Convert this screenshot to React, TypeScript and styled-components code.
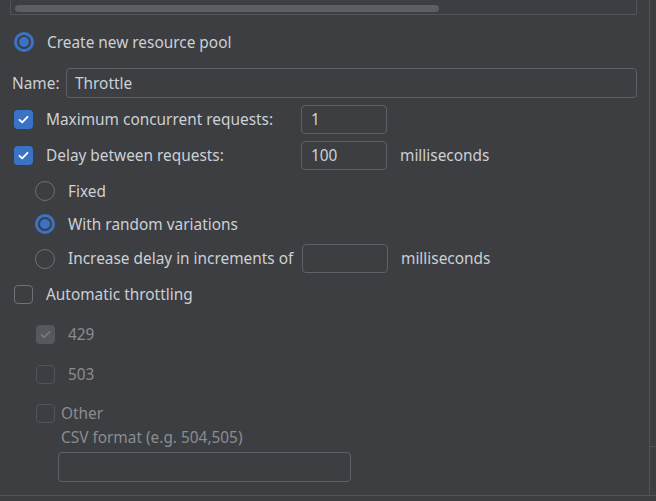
import React from "react";
import styled, { createGlobalStyle } from "styled-components";

const GlobalStyle = createGlobalStyle`
    html, body {
        margin: 0;
        padding: 0;
        background: #3c3e41;
    }
    body {
        font-family: "Noto Sans", "Open Sans", sans-serif;
        font-size: 15.4px;
        color: #cdd0d4;
    }
`;

const BLUE = "#3a73c6";

const Window = styled.div`
    width: 656px;
    height: 501px;
    display: flex;
    flex-direction: column;
    overflow: hidden;
    background: #3c3e41;
`;

const Body = styled.div`
    display: flex;
    height: 495px;
`;

const Main = styled.div`
    width: 649px;
    border-right: 1px solid #505357;
    display: flex;
    flex-direction: column;
`;

const Side = styled.div`
    flex: 1;
    display: flex;
    flex-direction: column;
    .side-top {
        height: 446px;
        border-bottom: 1px solid #505357;
    }
`;

const Footer = styled.div`
    flex: 1;
    border-top: 1px solid #505357;
`;

const ScrollBox = styled.div`
    margin-left: 10px;
    width: 627px;
    height: 15px;
    border: 1px solid #505357;
    border-top: none;
    padding: 5px 0 0 4px;
    box-sizing: border-box;
`;

const Thumb = styled.div`
    width: 424px;
    height: 7px;
    border-radius: 4px;
    background: #5b5e62;
`;

const Row = styled.div<{ $top: number; $h: number; $indent?: number }>`
    display: flex;
    align-items: center;
    margin-top: ${(p) => p.$top}px;
    height: ${(p) => p.$h}px;
    padding-left: ${(p) => p.$indent ?? 14}px;
    box-sizing: border-box;
`;

const Label = styled.span<{ $w?: number; $gap?: number; $disabled?: boolean }>`
    margin-left: ${(p) => p.$gap ?? 13}px;
    width: ${(p) => (p.$w ? p.$w + "px" : "auto")};
    flex-shrink: 0;
    white-space: nowrap;
    color: ${(p) => (p.$disabled ? "#8a8d91" : "#cdd0d4")};
`;

const Radio = styled.span<{ $on?: boolean }>`
    width: 20px;
    height: 20px;
    border-radius: 50%;
    box-sizing: border-box;
    flex-shrink: 0;
    border: ${(p) => (p.$on ? `3px solid ${BLUE}` : "1.5px solid #6e7175")};
    display: flex;
    align-items: center;
    justify-content: center;
    &::after {
        content: "";
        display: ${(p) => (p.$on ? "block" : "none")};
        width: 10px;
        height: 10px;
        border-radius: 50%;
        background: ${BLUE};
    }
`;

const Box = styled.span<{ $on?: boolean; $disabled?: boolean }>`
    width: 19px;
    height: 19px;
    border-radius: 4px;
    box-sizing: border-box;
    flex-shrink: 0;
    display: flex;
    align-items: center;
    justify-content: center;
    background: ${(p) => (p.$on ? (p.$disabled ? "#55585c" : BLUE) : "transparent")};
    border: ${(p) =>
        p.$on ? "none" : p.$disabled ? "1px solid #515458" : "1px solid #6e7175"};
`;

const Field = styled.div<{ $w: number; $h?: number }>`
    width: ${(p) => p.$w}px;
    height: ${(p) => p.$h ?? 29}px;
    border: 1px solid #5e6165;
    border-radius: 4px;
    box-sizing: border-box;
    padding-left: 9px;
    display: flex;
    align-items: center;
    flex-shrink: 0;
    color: #cdd0d4;
`;

const Unit = styled.span`
    margin-left: 13px;
    white-space: nowrap;
`;

const SubLabel = styled.div`
    margin-top: 6px;
    height: 18px;
    line-height: 18px;
    padding-left: 61px;
    color: #8a8d91;
`;

const Check: React.FC<{ on?: boolean; disabled?: boolean }> = ({ on, disabled }) => (
    <Box $on={on} $disabled={disabled}>
        {on && (
            <svg width="13" height="13" viewBox="0 0 13 13">
                <path
                    d="M2.5 6.8 L5.2 9.4 L10.5 3.8"
                    fill="none"
                    stroke={disabled ? "#75787c" : "#ffffff"}
                    strokeWidth="1.8"
                    strokeLinecap="round"
                    strokeLinejoin="round"
                />
            </svg>
        )}
    </Box>
);

const App: React.FC = () => {
    return (
        <Window>
            <GlobalStyle />
            <Body>
                <Main>
                    <ScrollBox>
                        <Thumb />
                    </ScrollBox>

                    <Row $top={17} $h={20}>
                        <Radio $on />
                        <Label>Create new resource pool</Label>
                    </Row>

                    <Row $top={16} $h={30} $indent={12}>
                        <Label $gap={0} $w={54}>
                            Name:
                        </Label>
                        <Field $w={571} $h={30} style={{ paddingLeft: 8 }}>
                            Throttle
                        </Field>
                    </Row>

                    <Row $top={7} $h={29}>
                        <Check on />
                        <Label $w={255}>Maximum concurrent requests:</Label>
                        <Field $w={86}>1</Field>
                    </Row>

                    <Row $top={7} $h={29}>
                        <Check on />
                        <Label $w={255}>Delay between requests:</Label>
                        <Field $w={86}>100</Field>
                        <Unit>milliseconds</Unit>
                    </Row>

                    <Row $top={11} $h={20} $indent={35}>
                        <Radio />
                        <Label>Fixed</Label>
                    </Row>

                    <Row $top={13} $h={20} $indent={35}>
                        <Radio $on />
                        <Label>With random variations</Label>
                    </Row>

                    <Row $top={10} $h={29} $indent={35}>
                        <Radio />
                        <Label $w={234}>Increase delay in increments of</Label>
                        <Field $w={86} />
                        <Unit>milliseconds</Unit>
                    </Row>

                    <Row $top={11} $h={20}>
                        <Check />
                        <Label>Automatic throttling</Label>
                    </Row>

                    <Row $top={20} $h={20} $indent={36}>
                        <Check on disabled />
                        <Label $disabled>429</Label>
                    </Row>

                    <Row $top={20} $h={20} $indent={36}>
                        <Check disabled />
                        <Label $disabled>503</Label>
                    </Row>

                    <Row $top={19} $h={20} $indent={36}>
                        <Check disabled />
                        <Label $disabled $gap={6}>
                            Other
                        </Label>
                    </Row>

                    <SubLabel>CSV format (e.g. 504,505)</SubLabel>

                    <Row $top={5} $h={30} $indent={58}>
                        <Field $w={293} $h={30} />
                    </Row>
                </Main>
                <Side>
                    <div className="side-top" />
                </Side>
            </Body>
            <Footer />
        </Window>
    );
};

export default App;
